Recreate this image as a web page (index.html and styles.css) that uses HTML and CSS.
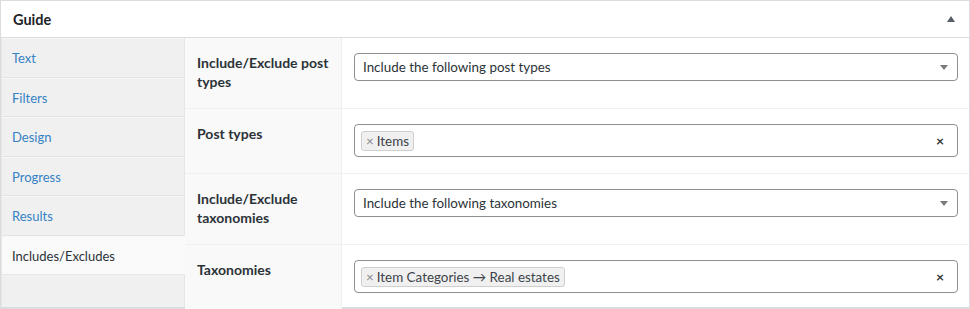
FILE: index.html
```html
<!DOCTYPE html>
<html lang="en">
<head>
<meta charset="utf-8">
<title>Guide</title>
<link rel="stylesheet" href="styles.css">
</head>
<body>
<div class="panel">
  <div class="panel-head">
    <span class="panel-title">Guide</span>
    <svg class="toggle" width="10" height="8" viewBox="0 0 10 8"><path d="M1 7 L5 1 L9 7 Z" fill="#555d66"/></svg>
  </div>
  <div class="panel-body">
    <ul class="tabs">
      <li class="tab">Text</li>
      <li class="tab">Filters</li>
      <li class="tab">Design</li>
      <li class="tab">Progress</li>
      <li class="tab">Results</li>
      <li class="tab active">Includes/Excludes</li>
    </ul>
    <div class="form">
      <div class="row">
        <div class="label">Include/Exclude post types</div>
        <div class="field">
          <div class="select"><span>Include the following post types</span><svg class="arrow" width="10" height="6" viewBox="0 0 10 6"><path d="M1 1 L9 1 L5 6 Z" fill="#7b7b7b"/></svg></div>
        </div>
      </div>
      <div class="row">
        <div class="label">Post types</div>
        <div class="field">
          <div class="multi"><span class="chip"><span class="chip-x">×</span>Items</span><span class="clear">×</span></div>
        </div>
      </div>
      <div class="row">
        <div class="label">Include/Exclude taxonomies</div>
        <div class="field">
          <div class="select"><span>Include the following taxonomies</span><svg class="arrow" width="10" height="6" viewBox="0 0 10 6"><path d="M1 1 L9 1 L5 6 Z" fill="#7b7b7b"/></svg></div>
        </div>
      </div>
      <div class="row last">
        <div class="label">Taxonomies</div>
        <div class="field">
          <div class="multi"><span class="chip"><span class="chip-x">×</span>Item Categories → Real estates</span><span class="clear">×</span></div>
        </div>
      </div>
    </div>
  </div>
</div>
</body>
</html>
```
FILE: styles.css
```css
* { box-sizing: border-box; }
html, body { margin: 0; padding: 0; background: #fff; }
body {
  font-family: Lato, "Noto Sans", "Liberation Sans", sans-serif;
  font-size: 13px;
  color: #2c3338;
}
.panel {
  width: 970px;
  height: 309px;
  border: 1px solid #dcdcde;
  border-bottom-width: 2px;
  background: #fff;
  display: flex;
  flex-direction: column;
}
.panel-head {
  height: 37px;
  border-bottom: 1px solid #dcdcde;
  display: flex;
  align-items: center;
  justify-content: space-between;
  padding: 0 12px 0 12px;
}
.panel-title {
  font-size: 14.5px;
  font-weight: 700;
  color: #1d2327;
}
.toggle { margin-right: 1px; }
.panel-body {
  flex: 1;
  display: flex;
  min-height: 0;
}
.tabs {
  list-style: none;
  margin: 0;
  padding: 0;
  width: 184px;
  background: #f0f0f0;
  border-left: 1px solid #e6e6e6;
  border-right: 1px solid #e6e6e6;
}
.tab {
  height: 39.5px;
  line-height: 38px;
  padding: 0 10px;
  color: #3582c4;
  font-size: 13px;
  border-bottom: 1px solid #e4e4e4;
  border-top: 1px solid #f7f7f7;
}
.tab.active {
  background: #fafafa;
  color: #2c3338;
  margin-right: -1px;
  border-bottom-color: #e8e8e8;
}
.form {
  flex: 1;
  display: flex;
  flex-direction: column;
}
.row {
  display: flex;
  border-bottom: 1px solid #f0f0f0;
}
.row.last { border-bottom: none; }
.label {
  width: 157px;
  flex: none;
  background: #f9f9f9;
  border-right: 1px solid #f0f0f0;
  padding: 15px 12px 17px 12px;
  font-size: 14px;
  font-weight: 700;
  line-height: 19px;
  color: #2c3338;
}
.field {
  flex: 1;
  padding: 15px 11px 16px 12px;
}
.select {
  height: 28px;
  border: 1px solid #8c8f94;
  border-radius: 4px;
  display: flex;
  align-items: center;
  justify-content: space-between;
  padding: 0 8px 0 8px;
  font-size: 13.4px;
  color: #2c3338;
}
.multi {
  height: 33px;
  border: 1px solid #8c8f94;
  border-radius: 4px;
  display: flex;
  align-items: center;
  padding: 0 13px 0 6px;
}
.chip {
  height: 20px;
  line-height: 18px;
  border: 1px solid #cfcfcf;
  background: #f0f0f0;
  border-radius: 3px;
  padding: 0 4px 0 4px;
  font-size: 13.4px;
  color: #3c434a;
}
.chip-x {
  color: #888;
  margin-right: 3px;
}
.clear {
  margin-left: auto;
  font-weight: 700;
  font-size: 14px;
  color: #333;
}
```
